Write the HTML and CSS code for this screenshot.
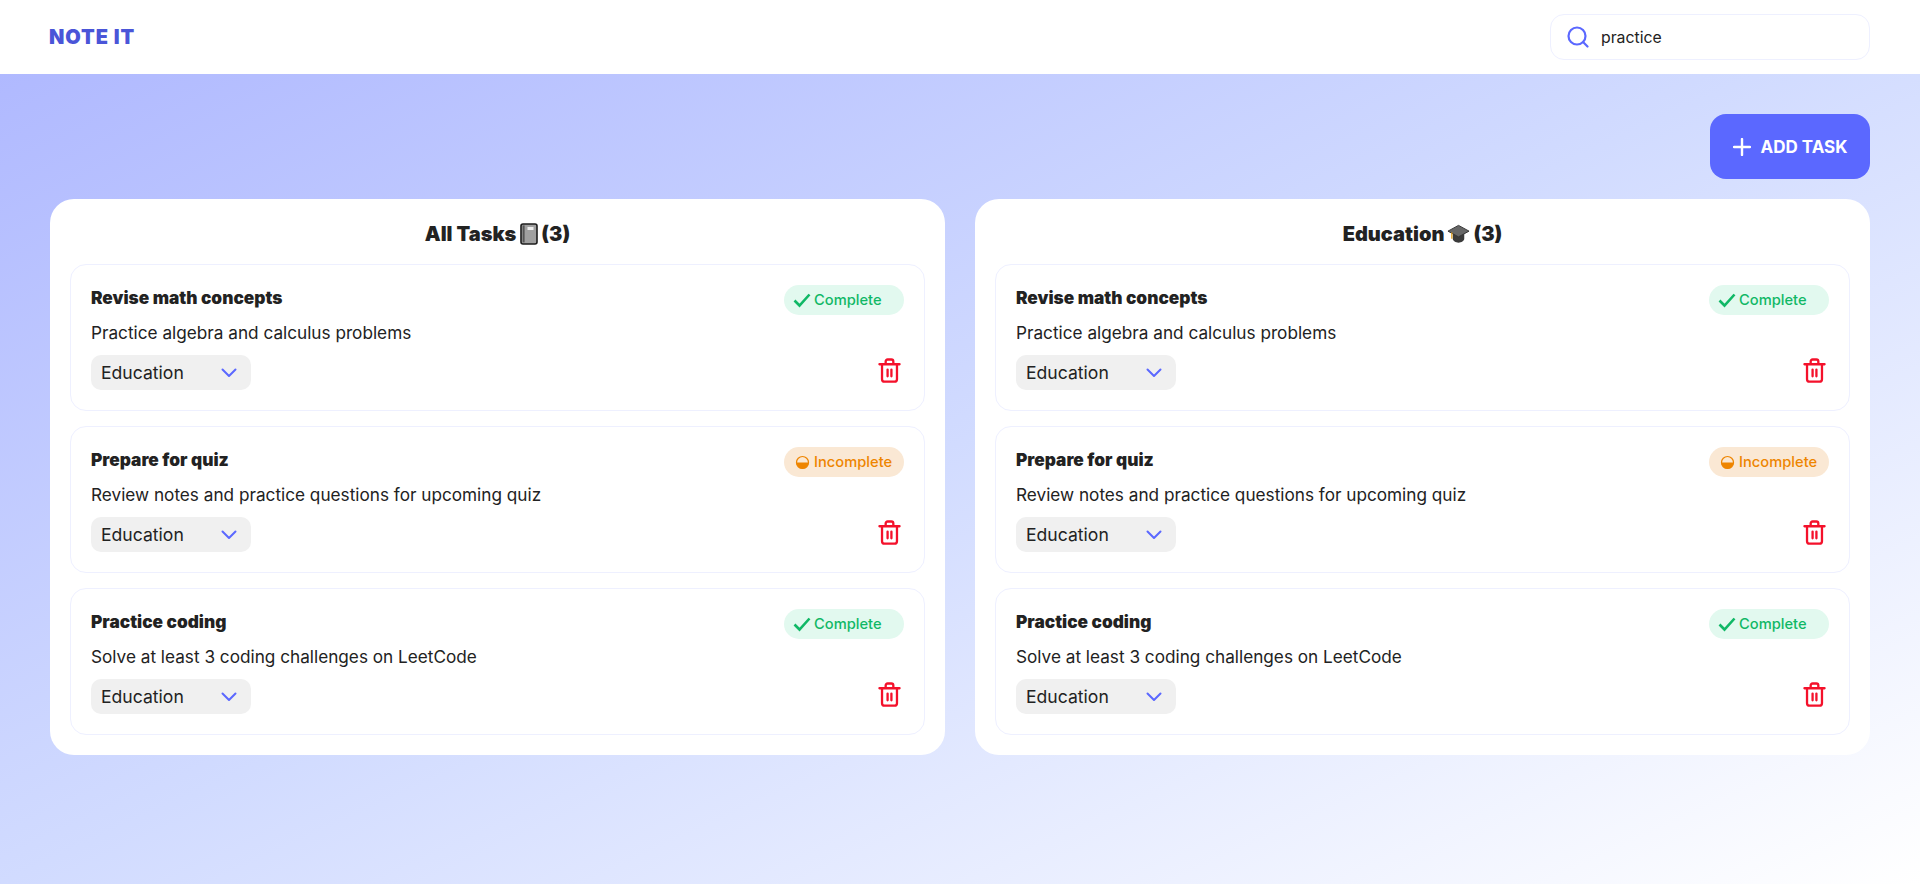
FILE: index.html
```html
<!DOCTYPE html>
<html lang="en">
<head>
<meta charset="utf-8">
<title>Note It</title>
<link rel="stylesheet" href="styles.css">
</head>
<body>
<svg class="defs" width="0" height="0" aria-hidden="true">
  <symbol id="chev" viewBox="0 0 16 16"><path d="M1.5 4.5 8 11l6.5-6.5" fill="none" stroke="#5b68ff" stroke-width="2" stroke-linecap="round" stroke-linejoin="round"/></symbol>
  <symbol id="check" viewBox="0 0 18 18"><path d="M1.5 9.5 6.5 14.5 16.5 3.5" fill="none" stroke="#10b866" stroke-width="2.6"/></symbol>
  <symbol id="half" viewBox="0 0 16 16"><circle cx="8" cy="8" r="6.4" fill="none" stroke="#ee8500" stroke-width="1.3"/><path d="M1.5 8h13a6.5 6.5 0 0 1-13 0z" fill="#ee8500"/></symbol>
  <symbol id="trash" viewBox="0 0 24 26"><g fill="none" stroke="#f4112b" stroke-width="2.4" stroke-linejoin="round" stroke-linecap="round"><path d="M1.5 6.5h21"/><path d="M8 6V3.5A2 2 0 0 1 10 1.5h4a2 2 0 0 1 2 2V6"/><path d="M4.2 7v15a2.6 2.6 0 0 0 2.6 2.6h10.4a2.6 2.6 0 0 0 2.6-2.6V7"/><path d="M10 12v7M14 12v7"/></g></symbol>
</svg>

<header class="topbar">
  <div class="logo">NOTE IT</div>
  <label class="search">
    <svg class="search-icon" viewBox="0 0 22 22"><circle cx="10" cy="10" r="8.5" fill="none" stroke="#5b68ff" stroke-width="2.2"/><path d="M16.3 16.3l4.2 4.2" fill="none" stroke="#5b68ff" stroke-width="2.2" stroke-linecap="round"/></svg>
    <span class="search-text">practice</span>
  </label>
</header>

<main class="page">
  <div class="actions">
    <button class="add-btn"><svg class="plus" viewBox="0 0 18 18"><path d="M9 1v16M1 9h16" fill="none" stroke="#fff" stroke-width="2.4" stroke-linecap="round"/></svg>ADD TASK</button>
  </div>
  <div class="columns">
    <section class="panel">
      <h2 class="panel-title">All Tasks <svg class="emoji-book" viewBox="0 0 18 22"><rect x="1" y="1" width="16" height="20" rx="2" fill="#a0a0a0" stroke="#1d1d1d" stroke-width="1.6"/><rect x="2.6" y="2.4" width="2" height="17" fill="#555"/><rect x="7.5" y="4" width="6" height="3" fill="#eee"/></svg>(3)</h2>
      <div class="tasks">
        <article class="task">
          <div class="task-top"><h3 class="task-title">Revise math concepts</h3><span class="badge done"><svg class="badge-icon" viewBox="0 0 18 18"><use href="#check"/></svg>Complete</span></div>
          <p class="task-desc">Practice algebra and calculus problems</p>
          <div class="task-bottom"><div class="select"><span>Education</span><svg class="chev"><use href="#chev"/></svg></div><svg class="trash"><use href="#trash"/></svg></div>
        </article>
        <article class="task">
          <div class="task-top"><h3 class="task-title">Prepare for quiz</h3><span class="badge todo"><svg class="badge-icon half" viewBox="0 0 16 16"><use href="#half"/></svg>Incomplete</span></div>
          <p class="task-desc">Review notes and practice questions for upcoming quiz</p>
          <div class="task-bottom"><div class="select"><span>Education</span><svg class="chev"><use href="#chev"/></svg></div><svg class="trash"><use href="#trash"/></svg></div>
        </article>
        <article class="task">
          <div class="task-top"><h3 class="task-title">Practice coding</h3><span class="badge done"><svg class="badge-icon" viewBox="0 0 18 18"><use href="#check"/></svg>Complete</span></div>
          <p class="task-desc">Solve at least 3 coding challenges on LeetCode</p>
          <div class="task-bottom"><div class="select"><span>Education</span><svg class="chev"><use href="#chev"/></svg></div><svg class="trash"><use href="#trash"/></svg></div>
        </article>
      </div>
    </section>
    <section class="panel">
      <h2 class="panel-title">Education<svg class="emoji-cap" viewBox="0 0 24 20"><path d="M6 9v6c0 2 3 4 6 4s6-2 6-4V9z" fill="#3a3a3a"/><path d="M12 1 23 7 12 13 1 7z" fill="#666" stroke="#333" stroke-width="1"/><path d="M5 8.5V15" stroke="#e2a11e" stroke-width="1.3" fill="none"/></svg>(3)</h2>
      <div class="tasks">
        <article class="task">
          <div class="task-top"><h3 class="task-title">Revise math concepts</h3><span class="badge done"><svg class="badge-icon" viewBox="0 0 18 18"><use href="#check"/></svg>Complete</span></div>
          <p class="task-desc">Practice algebra and calculus problems</p>
          <div class="task-bottom"><div class="select"><span>Education</span><svg class="chev"><use href="#chev"/></svg></div><svg class="trash"><use href="#trash"/></svg></div>
        </article>
        <article class="task">
          <div class="task-top"><h3 class="task-title">Prepare for quiz</h3><span class="badge todo"><svg class="badge-icon half" viewBox="0 0 16 16"><use href="#half"/></svg>Incomplete</span></div>
          <p class="task-desc">Review notes and practice questions for upcoming quiz</p>
          <div class="task-bottom"><div class="select"><span>Education</span><svg class="chev"><use href="#chev"/></svg></div><svg class="trash"><use href="#trash"/></svg></div>
        </article>
        <article class="task">
          <div class="task-top"><h3 class="task-title">Practice coding</h3><span class="badge done"><svg class="badge-icon" viewBox="0 0 18 18"><use href="#check"/></svg>Complete</span></div>
          <p class="task-desc">Solve at least 3 coding challenges on LeetCode</p>
          <div class="task-bottom"><div class="select"><span>Education</span><svg class="chev"><use href="#chev"/></svg></div><svg class="trash"><use href="#trash"/></svg></div>
        </article>
      </div>
    </section>
  </div>
</main>
</body>
</html>
```
FILE: styles.css
```css
* { box-sizing: border-box; }
html, body { height: 100%; }
body {
  margin: 0;
  font-family: Inter, "Liberation Sans", sans-serif;
  color: #222;
  overflow: hidden;
  display: flex;
  flex-direction: column;
  background: linear-gradient(to bottom right, #adb6ff 0%, #d1dbff 50%, #ffffff 100%);
}
.defs { position: absolute; }

.topbar {
  flex: 0 0 74px;
  background: #fff;
  display: flex;
  align-items: center;
  justify-content: space-between;
  padding: 0 50px 1px 49px;
}
.logo {
  font-family: Inter, sans-serif;
  font-weight: 900;
  font-size: 20px;
  color: #4a55d8;
  letter-spacing: 0.9px;
}
.search {
  width: 320px;
  height: 46px;
  border: 1px solid #eef0ff;
  border-radius: 14px;
  display: flex;
  align-items: center;
  padding-left: 16px;
  gap: 12px;
  background: #fff;
}
.search-icon { width: 22px; height: 22px; }
.search-text { font-size: 15.8px; color: #222; padding-top: 1px; }

.page {
  flex: 1;
  padding: 40px 50px 0;
}
.actions { display: flex; justify-content: flex-end; margin-bottom: 20px; }
.add-btn {
  width: 160px;
  height: 65px;
  border: 0;
  border-radius: 16px;
  background: #5b68ff;
  color: #fff;
  font-family: Inter, sans-serif;
  font-weight: 700;
  font-size: 17px;
  display: flex;
  align-items: center;
  justify-content: center;
  gap: 10px;
}
.plus { width: 18px; height: 18px; }

.columns { display: grid; grid-template-columns: 1fr 1fr; gap: 30px; }
.panel {
  background: #fff;
  border-radius: 24px;
  padding: 20px;
}
.panel-title {
  margin: 0 0 15px;
  height: 30px;
  font-size: 20px;
  font-weight: 900;
  display: flex;
  align-items: center;
  justify-content: center;
  white-space: pre;
}
.emoji-book { width: 18px; height: 22px; margin: 0 3px 0 0; }
.emoji-cap { width: 23px; height: 20px; margin: 0 3px; }

.tasks { display: flex; flex-direction: column; gap: 15px; }
.task {
  height: 147px;
  border: 1px solid #eef0ff;
  border-radius: 16px;
  padding: 20px 20px 0;
}
.task-top { display: flex; justify-content: space-between; align-items: flex-start; }
.task-title { margin: 0; font-size: 17.3px; font-weight: 900; line-height: 26px; }
.badge {
  width: 120px;
  height: 30px;
  border-radius: 15px;
  display: flex;
  align-items: center;
  justify-content: flex-start;
  padding-left: 9px;
  gap: 3px;
  font-size: 14.7px;
  font-weight: 500;
}
.badge.done { background: #e2f9ef; color: #10b866; }
.badge.todo { background: #fae8d4; color: #ee8500; }
.badge-icon { width: 18px; height: 18px; }
.badge-icon.half { width: 15px; height: 15px; margin: 0 1px 0 2px; }
.task-desc { margin: 6px 0 0; font-size: 17.2px; line-height: 24px; }
.task-bottom { display: flex; justify-content: space-between; align-items: center; margin-top: 10px; }
.select {
  width: 160px;
  height: 35px;
  background: #f0f0f0;
  border-radius: 10px;
  padding: 0 14px 0 10px;
  display: flex;
  align-items: center;
  justify-content: space-between;
  font-size: 17.6px;
}
.chev { width: 16px; height: 16px; }
.trash { width: 23px; height: 25px; margin-right: 3px; margin-top: -5px; }
```
